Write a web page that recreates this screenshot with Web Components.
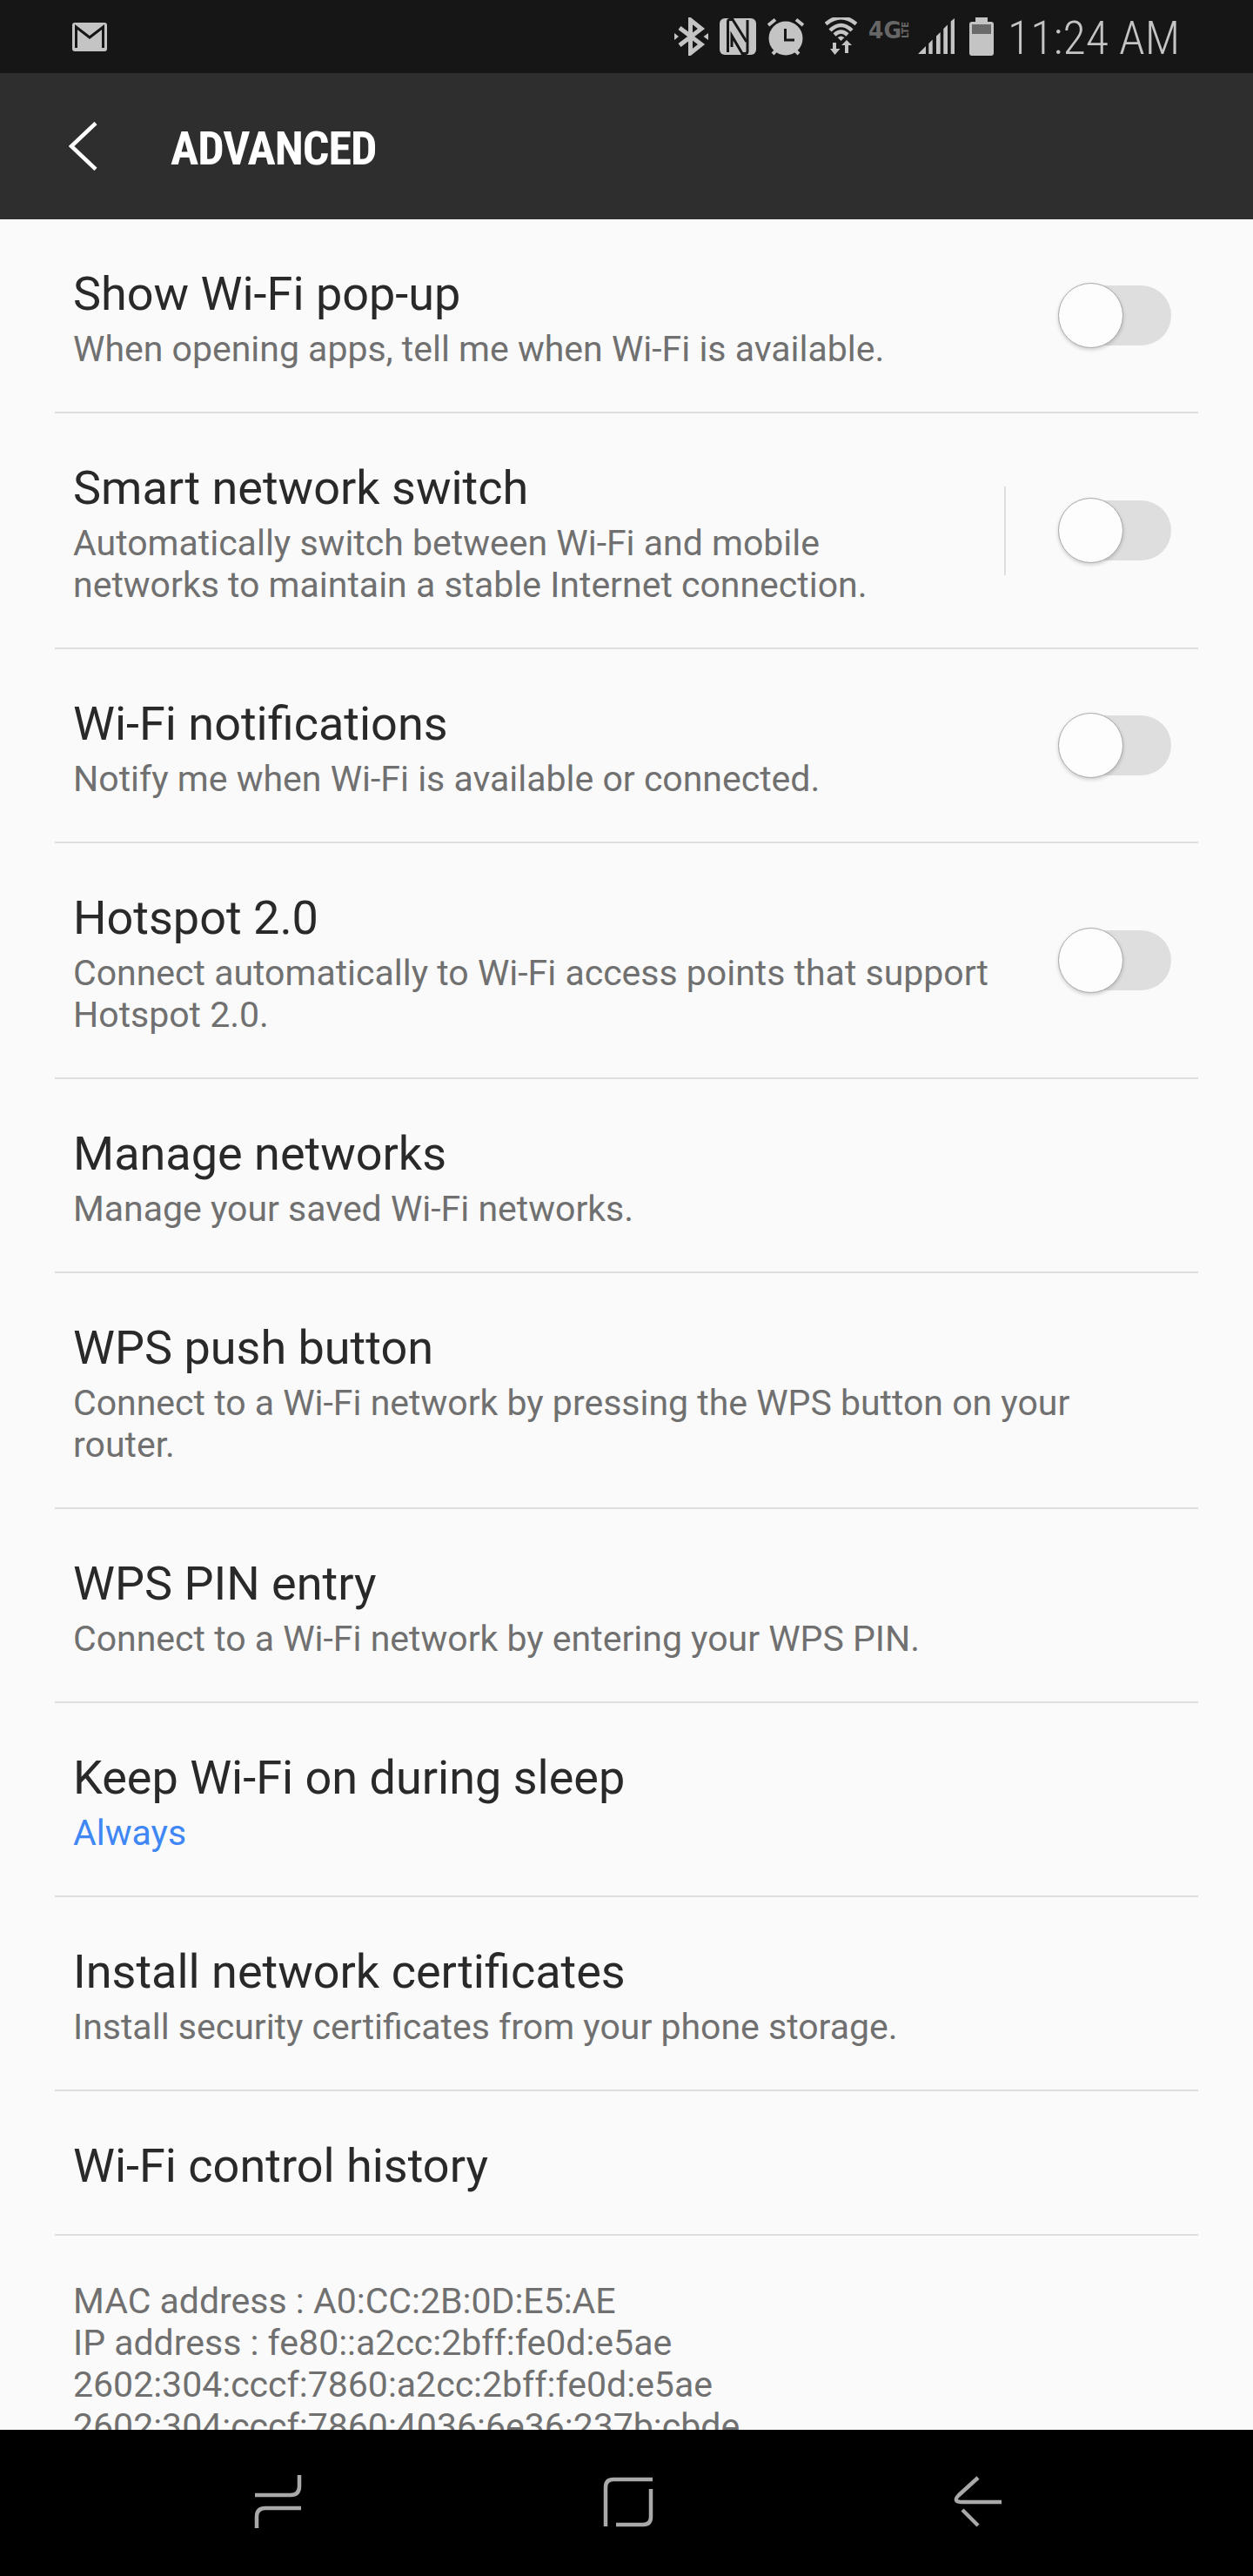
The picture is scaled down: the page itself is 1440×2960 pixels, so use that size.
<!DOCTYPE html>
<html>
<head>
<meta charset="utf-8">
<title>Advanced</title>
<style>
    html, body { margin: 0; height: 2960px; overflow: hidden; background: #fafafa; }
    body { font-family: Roboto, sans-serif; display: flex; flex-direction: column; }
    main { flex: 1; min-height: 0; overflow: hidden; }
</style>
</head>
<body>

<template id="template-status">
    <style>
        :host { display: flex; align-items: center; flex: none; height: 84px; background: #161616; color: #c4c4c4; padding-left: 83px; }
        svg { display: block; flex: none; }
        .gmail { margin-right: 652px; }
        .time { font: 300 54px/81px Roboto, sans-serif; font-stretch: 75%; white-space: nowrap; margin-left: 16px; padding-top: 3px; }
    </style>
    <svg class="gmail" width="40" height="33" viewBox="0 0 40 33">
        <rect width="40" height="33" rx="3" fill="#c4c4c4"/>
        <path d="M4.500 29V5L20 17L35.500 5V29" fill="none" stroke="#161616" stroke-width="3"/>
    </svg>
    <svg width="39" height="44" viewBox="0 0 39 44">
        <path d="M6 12L31 31L18.500 41V3L31 13L6 32" fill="none" stroke="#c4c4c4" stroke-width="5"/>
        <path d="M0 18L5 22L0 26ZM39 18L33.500 22L39 26Z" fill="#c4c4c4"/>
    </svg>
    <svg style="margin-left:13px" width="42" height="44" viewBox="0 0 42 44">
        <rect y="1" width="42" height="42" rx="6" fill="#c4c4c4"/>
        <path d="M9.500 40V5Q9.500 2.500 12 2.500H15L31 28" fill="none" stroke="#161616" stroke-width="3"/>
        <path d="M32 3V39Q32 41.500 29.500 41.500H26L14 21V34" fill="none" stroke="#161616" stroke-width="3"/>
    </svg>
    <svg style="margin-left:13px" width="42" height="44" viewBox="0 0 42 44">
        <circle cx="21" cy="24" r="19.500" fill="#c4c4c4"/>
        <path d="M1 9L9 2.500M41 9L33 2.500M6 42L10 38M36 42L32 38" stroke="#c4c4c4" stroke-width="4"/>
        <path d="M20.500 13V26H31" fill="none" stroke="#161616" stroke-width="3"/>
    </svg>
    <svg style="margin-left:24px" width="37" height="44" viewBox="0 0 37 44">
        <path d="M1 7.500Q18.500 -7 36 7.500M6 15Q18.500 3 31 15M11 20Q18.500 13 26 20" fill="none" stroke="#c4c4c4" stroke-width="4.500"/>
        <path d="M14.500 23L18.500 21.500L22.500 23L18.500 27Z" fill="#c4c4c4"/>
        <path d="M9 29H13V36H17.500L11.500 43L6 36H9ZM23 41H27V32H31L25 26L19 32H23Z" fill="#c4c4c4"/>
    </svg>
    <svg style="margin-left:13px;margin-right:-3px" width="50" height="44" viewBox="0 0 50 44">
        <text x="0" y="24" font-family="DejaVu Sans" font-weight="700" font-size="26" textLength="38" lengthAdjust="spacingAndGlyphs" fill="#666">4G</text>
        <text transform="translate(46 24) rotate(-90)" x="0" y="0" font-family="DejaVu Sans" font-weight="700" font-size="10" textLength="19" lengthAdjust="spacingAndGlyphs" fill="#666">LTE</text>
    </svg>
    <svg style="margin-left:10px" width="42" height="44" viewBox="0 0 42 44">
        <path d="M0 42L9 33V42ZM12.300 42V30L16.700 25.500V42ZM21 42V21.500L25.700 17V42ZM29.300 42V13L34 8.500V42ZM37.700 42V4.500L42 1V42Z" fill="#c4c4c4"/>
    </svg>
    <svg style="margin-left:17px" width="28" height="44" viewBox="0 0 28 44">
        <path d="M7 0H21V5H25Q28 5 28 8V41Q28 44 25 44H3Q0 44 0 41V8Q0 5 3 5H7Z" fill="#c4c4c4"/>
        <rect x="3" y="8" width="22" height="11" fill="#6a6a6a"/>
    </svg>
    <span class="time">11:24 AM</span>
</template>

<template id="template-appbar">
    <style>
        :host { display: flex; align-items: center; flex: none; height: 168px; background: #2e2e2e; color: #fff; padding-left: 79px; }
        svg { display: block; margin-right: 84px; }
        .title { font: 700 54px/60px Roboto, sans-serif; font-stretch: 75%; letter-spacing: -1px; padding-top: 5px; white-space: nowrap; }
    </style>
    <svg width="33" height="56" viewBox="0 0 33 56">
        <path d="M31 1.500L3 28L31 54.500" fill="none" stroke="#fff" stroke-width="4.500"/>
    </svg>
    <span class="title"><slot></slot></span>
</template>

<template id="template-row">
    <style>
        :host { display: block; margin: 0 63px; border-bottom: 2px solid #dedede; }
        .inner { display: flex; align-items: center; padding-left: 21px; }
        .text { flex: 1; min-width: 0; padding: 56px 0 48px; }
        ::slotted([slot=title]) { display: block; font-size: 54px; line-height: 60px; color: #292929; white-space: nowrap; }
        ::slotted([slot=sub]) { display: block; margin-top: 9px; font-size: 41px; line-height: 48px; color: #707070; }
    </style>
    <div class="inner">
        <div class="text"><slot name="title"></slot><slot name="sub"></slot></div>
        <slot name="control"></slot>
    </div>
</template>

<template id="template-toggle">
    <style>
        :host { display: flex; align-items: center; flex: none; margin-right: 31px; }
        .rule { display: none; width: 2px; height: 102px; background: #dedede; margin-right: 60px; }
        :host([divider]) .rule { display: block; }
        .switch { position: relative; width: 130px; height: 75px; }
        .track { position: absolute; inset: 3px 0 3px 2px; border-radius: 35px; background: #dedede; }
        .thumb { position: absolute; left: 0; top: 0; width: 75px; height: 75px; box-sizing: border-box; border-radius: 50%; background: #fdfdfd; border: 1.500px solid #a9a9a9; box-shadow: 0 2px 4px rgba(0,0,0,.18); }
    </style>
    <span class="rule"></span>
    <span class="switch"><span class="track"></span><span class="thumb"></span></span>
</template>

<template id="template-info">
    <style>
        :host { display: block; padding: 51px 0 0 84px; font-size: 41px; line-height: 48px; color: #707070; }
    </style>
    <slot></slot>
</template>

<template id="template-nav">
    <style>
        :host { display: flex; align-items: center; gap: 342px; flex: none; height: 168px; background: #000; padding-left: 290px; }
        svg { display: block; fill: none; stroke: #a9a9a9; stroke-width: 4.500; }
    </style>
    <svg width="60" height="64" viewBox="290 2844 60 64">
        <path d="M293 2867H334Q344 2867 344 2857V2844"/>
        <path d="M346 2882H305Q295 2882 295 2892V2905"/>
    </svg>
    <svg width="60" height="64" viewBox="692 2844 60 64">
        <path d="M696 2903V2858Q696 2849 705 2849H750"/>
        <path d="M748 2860V2892Q748 2901 739 2901H708"/>
    </svg>
    <svg width="60" height="64" viewBox="1094 2844 60 64">
        <path d="M1151 2875H1106Q1094 2875 1102 2867L1124 2847"/>
        <path d="M1106 2884L1124 2902"/>
    </svg>
</template>

<script>
    const simple = (tag, id) => customElements.define(tag, class extends HTMLElement {
        constructor() {
            super();
            const template = document.getElementById(id).content;
            this.attachShadow({ mode: 'open' }).appendChild(template.cloneNode(true));
        }
    });
    simple('status-bar', 'template-status');
    simple('app-bar', 'template-appbar');
    simple('set-row', 'template-row');
    simple('set-toggle', 'template-toggle');
    simple('net-info', 'template-info');
    simple('nav-bar', 'template-nav');
</script>

<status-bar></status-bar>
<app-bar>ADVANCED</app-bar>
<main>
    <set-row>
        <span slot="title">Show Wi-Fi pop-up</span>
        <span slot="sub">When opening apps, tell me when Wi-Fi is available.</span>
        <set-toggle slot="control"></set-toggle>
    </set-row>
    <set-row>
        <span slot="title">Smart network switch</span>
        <span slot="sub">Automatically switch between Wi-Fi and mobile<br>networks to maintain a stable Internet connection.</span>
        <set-toggle slot="control" divider></set-toggle>
    </set-row>
    <set-row>
        <span slot="title">Wi-Fi notifications</span>
        <span slot="sub">Notify me when Wi-Fi is available or connected.</span>
        <set-toggle slot="control"></set-toggle>
    </set-row>
    <set-row>
        <span slot="title">Hotspot 2.0</span>
        <span slot="sub">Connect automatically to Wi-Fi access points that support<br>Hotspot 2.0.</span>
        <set-toggle slot="control"></set-toggle>
    </set-row>
    <set-row>
        <span slot="title">Manage networks</span>
        <span slot="sub">Manage your saved Wi-Fi networks.</span>
    </set-row>
    <set-row>
        <span slot="title">WPS push button</span>
        <span slot="sub">Connect to a Wi-Fi network by pressing the WPS button on your<br>router.</span>
    </set-row>
    <set-row>
        <span slot="title">WPS PIN entry</span>
        <span slot="sub">Connect to a Wi-Fi network by entering your WPS PIN.</span>
    </set-row>
    <set-row>
        <span slot="title">Keep Wi-Fi on during sleep</span>
        <span slot="sub" style="color:#3f87f5">Always</span>
    </set-row>
    <set-row>
        <span slot="title">Install network certificates</span>
        <span slot="sub">Install security certificates from your phone storage.</span>
    </set-row>
    <set-row>
        <span slot="title">Wi-Fi control history</span>
    </set-row>
    <net-info>MAC address : A0:CC:2B:0D:E5:AE<br>IP address : fe80::a2cc:2bff:fe0d:e5ae<br>2602:304:cccf:7860:a2cc:2bff:fe0d:e5ae<br>2602:304:cccf:7860:4036:6e36:237b:cbde</net-info>
</main>
<nav-bar></nav-bar>

</body>
</html>
